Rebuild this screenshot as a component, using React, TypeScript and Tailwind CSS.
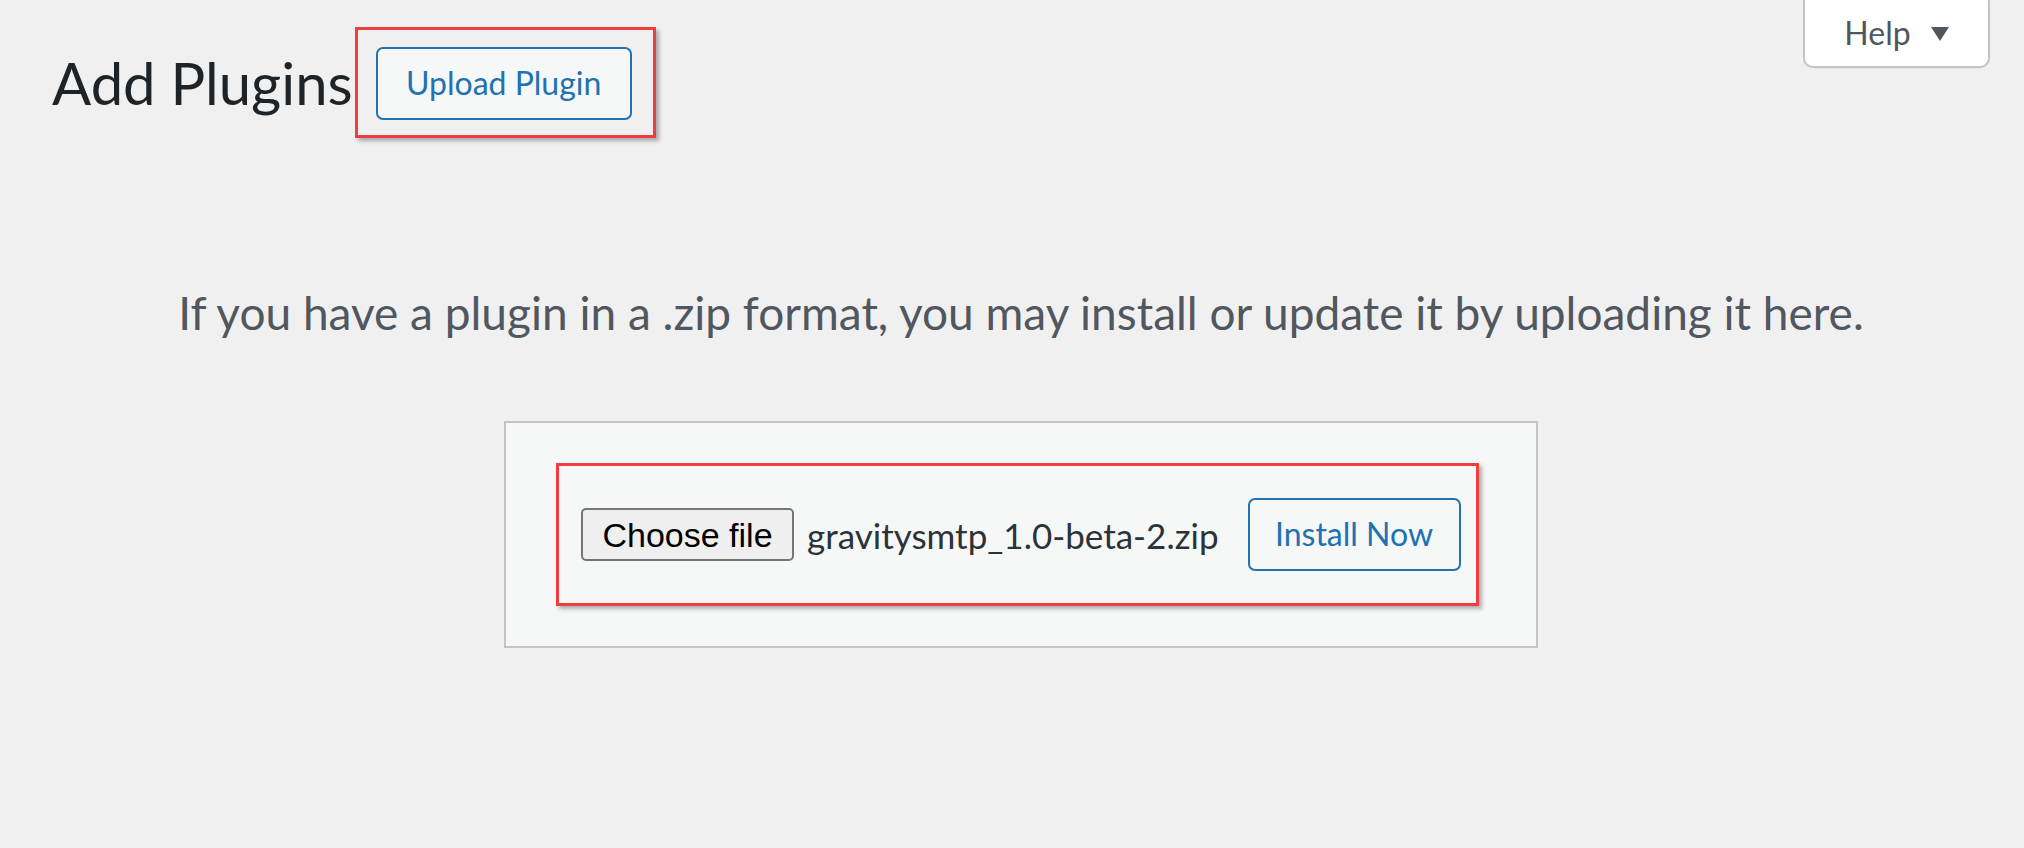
export default function App() {
  return (
    <div className="min-h-[848px] w-full bg-[#f0f0f1] pl-[52px] pr-[34px] font-['Lato',sans-serif]">
      {/* header row: title + upload button, help tab on the right */}
      <div className="flex items-start justify-between">
        <div className="flex items-start">
          <h1 className="mt-[47px] text-[58px] leading-[72px] font-normal text-[#1d2327]">
            Add Plugins
          </h1>
          <div className="ml-[2px] mt-[27px] border-[3px] border-[#f03e3e] pt-[17px] pb-[15px] pl-[18px] pr-[21px] shadow-[3px_3px_4px_rgba(0,0,0,0.3)]">
            <button className="flex h-[73px] w-[256px] items-center justify-center rounded-[7px] border-2 border-[#2271b1] bg-[#f6f7f7] text-[32px] leading-[1.2] text-[#2271b1]">
              Upload Plugin
            </button>
          </div>
        </div>
        <button className="flex h-[68px] w-[187px] items-center justify-center gap-[20px] rounded-b-[10px] border-2 border-t-0 border-[#c3c4c7] bg-white text-[32px] leading-[1.2] text-[#50575e] shadow-[0_1px_1px_rgba(0,0,0,0.04)]">
          <span>Help</span>
          <svg width="18" height="14" viewBox="0 0 18 14" className="mt-[2px]">
            <polygon points="0,0 18,0 9,14" fill="#50575e" />
          </svg>
        </button>
      </div>

      <p className="mt-[147px] text-center text-[46px] leading-[1.2] text-[#50575e]">
        If you have a plugin in a .zip format, you may install or update it by uploading it here.
      </p>

      <div className="mx-auto mt-[81px] h-[227px] w-[1034px] border-2 border-[#c3c4c7] bg-[#f6f7f7] pl-[50px] pt-[40px]">
        <div className="flex h-[143px] w-[923px] items-center border-[3px] border-[#f03e3e] pl-[22px] shadow-[3px_3px_4px_rgba(0,0,0,0.3)]">
          <button className="flex h-[53px] w-[213px] items-center justify-center rounded-[5px] border-2 border-[#767676] bg-[#efefef] font-['Liberation_Sans',Arial,sans-serif] text-[34px] leading-none text-black">
            Choose file
          </button>
          <span className="ml-[13px] text-[35px] leading-[1.2] text-[#2c3338]">
            gravitysmtp_1.0-beta-2.zip
          </span>
          <button className="ml-[29px] flex h-[73px] w-[213px] items-center justify-center rounded-[7px] border-2 border-[#2271b1] bg-[#f6f7f7] text-[32px] leading-[1.2] text-[#2271b1]">
            Install Now
          </button>
        </div>
      </div>
    </div>
  )
}
